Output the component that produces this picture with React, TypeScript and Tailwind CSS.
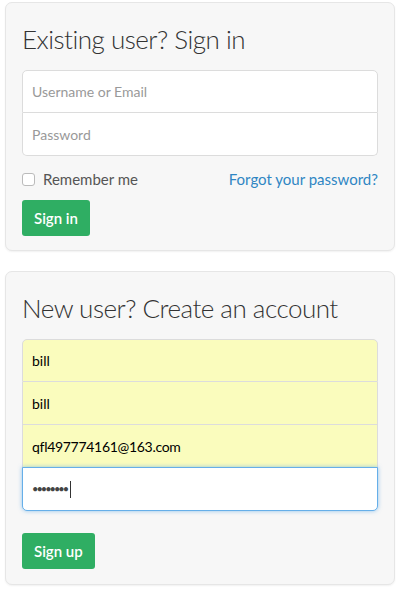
import React from "react";

function Row({ children, first, focus, yellow }: { children: React.ReactNode; first?: boolean; focus?: boolean; yellow?: boolean }) {
  const base = "flex items-center px-[9px] text-[14px] ";
  if (focus) {
    return (
      <div className={base + "relative z-10 -mt-px h-[44px] rounded-b-[5px] border border-[#66afe9] bg-white shadow-[0_0_4px_rgba(102,175,233,0.7)]"}>
        {children}
      </div>
    );
  }
  return (
    <div
      className={
        base +
        "h-[43px] border-x border-b border-[#dcdcdc] " +
        (first ? "rounded-t-[5px] border-t " : "") +
        (yellow ? "bg-[#fafcbd] " : "bg-white ")
      }
    >
      {children}
    </div>
  );
}

export default function App() {
  return (
    <div className="w-[400px] h-[592px] bg-white px-[5px] pt-[2px] font-['Lato',sans-serif]">
      <div className="rounded-[7px] border border-[#e6e6e6] bg-[#f7f7f7] px-4 pt-4 pb-[14px] shadow-[0_1px_2px_rgba(0,0,0,0.06)]">
        <h2 className="pt-[2px] mb-[13px] text-[26px] leading-[36px] tracking-[-0.5px] font-light text-[#333]">Existing user? Sign in</h2>
        <div>
          <Row first>
            <span className="text-[#999]">Username or Email</span>
          </Row>
          <div className="flex h-[43px] items-center rounded-b-[5px] border-x border-b border-[#dcdcdc] bg-white px-[9px] text-[14px]">
            <span className="text-[#999]">Password</span>
          </div>
        </div>
        <div className="mt-[11px] flex h-[24px] items-center justify-between text-[15px]">
          <div className="flex items-center">
            <div className="h-[13px] w-[13px] rounded-[3px] border border-[#bbb] bg-white" />
            <span className="ml-[8px] text-[#555]">Remember me</span>
          </div>
          <span className="text-[#2f86c3]">Forgot your password?</span>
        </div>
        <button className="mt-[9px] flex h-[36px] items-center rounded-[3px] bg-[#2fae63] px-[12px] text-[15px] font-semibold text-white">
          Sign in
        </button>
      </div>

      <div className="mt-[20px] rounded-[7px] border border-[#e6e6e6] bg-[#f7f7f7] px-4 pt-4 pb-[15px] shadow-[0_1px_2px_rgba(0,0,0,0.06)]">
        <h2 className="pt-[2px] mb-[13px] text-[26px] leading-[36px] tracking-[-0.5px] font-light text-[#333]">New user? Create an account</h2>
        <div>
          <Row first yellow>
            <span className="text-black">bill</span>
          </Row>
          <Row yellow>
            <span className="text-black">bill</span>
          </Row>
          <Row yellow>
            <span className="text-black tracking-[-0.3px]">qfl497774161@163.com</span>
          </Row>
          <Row focus>
            <span className="text-[11px] tracking-[-2px] text-[#444]">••••••••</span>
            <span className="ml-[3px] h-[17px] w-px bg-[#333]" />
          </Row>
        </div>
        <button className="mt-[22px] flex h-[36px] items-center rounded-[3px] bg-[#2fae63] px-[12px] text-[15px] font-semibold text-white">
          Sign up
        </button>
      </div>
    </div>
  );
}
